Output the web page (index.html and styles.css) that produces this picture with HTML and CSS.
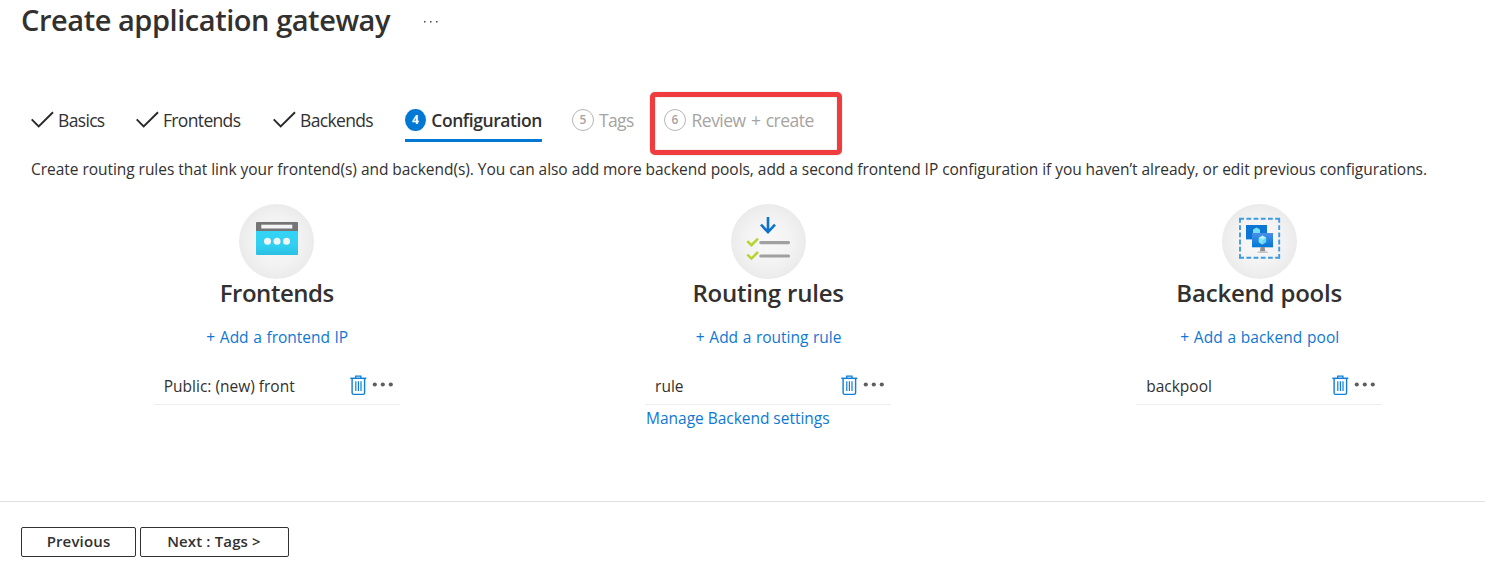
FILE: index.html
```html
<!DOCTYPE html>
<html lang="en">
<head>
<meta charset="utf-8">
<title>Create application gateway</title>
<link rel="stylesheet" href="styles.css">
</head>
<body>
<svg class="defs" width="0" height="0">
  <defs>
    <radialGradient id="disc"><stop offset="0" stop-color="#f8f8f8"/><stop offset="0.6" stop-color="#f3f3f3"/><stop offset="1" stop-color="#ebebeb"/></radialGradient>
    <linearGradient id="cyan" x1="0" y1="0" x2="0" y2="1"><stop offset="0" stop-color="#32d4f5"/><stop offset="0.6" stop-color="#32d0f2"/><stop offset="1" stop-color="#2bc0e2"/></linearGradient>
    <linearGradient id="screen" x1="0" y1="1" x2="0" y2="0"><stop offset="0" stop-color="#0078d4"/><stop offset="1" stop-color="#4a8fea"/></linearGradient>
    <symbol id="check" viewBox="0 0 24 18"><path d="M0.7 8.4 7.7 15.4 22 1.3" fill="none" stroke="#292827" stroke-width="1.9"/></symbol>
    <symbol id="trash" viewBox="0 0 17 21"><g fill="none" stroke="#0f7fd8"><path d="M0.3 3.3H16.3" stroke-width="1.5"/><path d="M5.7 3V1.1H10.9V3" stroke-width="1.3"/><path d="M2.1 4V17.8Q2.1 19.4 3.7 19.4H13Q14.6 19.4 14.6 17.8V4" stroke-width="1.4"/><path d="M5.8 6.3V16M8.4 6.3V16M11 6.3V16" stroke-width="1.2"/></g></symbol>
    <symbol id="more" viewBox="0 0 22 5"><g fill="#605e5c"><circle cx="2.8" cy="2.5" r="2.1"/><circle cx="10.8" cy="2.5" r="2.1"/><circle cx="18.8" cy="2.5" r="2.1"/></g></symbol>
  </defs>
</svg>

<header class="title-bar">
  <h1 class="title">Create application gateway</h1>
  <svg class="title-more" width="15" height="3"><g fill="#444"><rect x="1" y="1" width="1.5" height="1.5"/><rect x="7" y="1" width="1.5" height="1.5"/><rect x="13" y="1" width="1.5" height="1.5"/></g></svg>
</header>

<nav class="tabs">
  <a class="tab tab-basics"><svg class="check"><use href="#check"/></svg><span>Basics</span></a>
  <a class="tab tab-frontends"><svg class="check"><use href="#check"/></svg><span>Frontends</span></a>
  <a class="tab tab-backends"><svg class="check"><use href="#check"/></svg><span>Backends</span></a>
  <a class="tab tab-active"><b class="step">4</b><span class="label">Configuration</span></a>
  <a class="tab tab-off tab-tags"><b class="step">5</b><span>Tags</span></a>
  <a class="tab tab-off tab-review"><b class="step">6</b><span>Review + create</span><i class="highlight"></i></a>
</nav>

<p class="intro">Create routing rules that link your frontend(s) and backend(s). You can also add more backend pools, add a second frontend IP configuration if you haven’t already, or edit previous configurations.</p>

<main class="columns">
  <section class="column">
    <svg class="disc" viewBox="0 0 75 75">
      <circle cx="37.5" cy="37.5" r="37.5" fill="url(#disc)"/>
      <rect x="17" y="26" width="42" height="25" rx="1" fill="url(#cyan)"/>
      <path d="M17 27V19Q17 18 18 18H58Q59 18 59 19V27Z" fill="#757575"/>
      <rect x="22.3" y="20.7" width="31" height="3.8" fill="#f5f5f5"/>
      <g fill="#f2f5f6"><circle cx="28.5" cy="37.3" r="3.5"/><circle cx="38" cy="37.3" r="3.5"/><circle cx="47.5" cy="37.3" r="3.5"/></g>
    </svg>
    <h2 class="heading heading-frontends">Frontends</h2>
    <a class="add">+ Add a frontend IP</a>
    <div class="item"><span class="name">Public: (new) front</span><svg class="trash"><use href="#trash"/></svg><svg class="more"><use href="#more"/></svg></div>
  </section>
  <section class="column">
    <svg class="disc" viewBox="0 0 75 75">
      <circle cx="37.5" cy="37.5" r="37.5" fill="url(#disc)"/>
      <path d="M37 13V28M30 20.7 37 28.2 44 20.7" fill="none" stroke="#0f73c9" stroke-width="2.6"/>
      <path d="M29.8 38.6H57.5M29.8 52H57.5" stroke="#a0a0a0" stroke-width="3.2" stroke-linecap="round"/>
      <path d="M16.3 37.2 20.5 41.2 27 34.6M16.3 50.6 20.5 54.6 27 48" fill="none" stroke="#b4d52d" stroke-width="2.5"/>
    </svg>
    <h2 class="heading">Routing rules</h2>
    <a class="add">+ Add a routing rule</a>
    <div class="item"><span class="name">rule</span><svg class="trash"><use href="#trash"/></svg><svg class="more"><use href="#more"/></svg></div>
    <a class="manage">Manage Backend settings</a>
  </section>
  <section class="column">
    <svg class="disc" viewBox="0 0 75 75">
      <circle cx="37.5" cy="37.5" r="37.5" fill="url(#disc)"/>
      <g fill="none" stroke="#3f9be0" stroke-width="1.9"><path d="M17.2 14.7H58M17.2 53.7H58" stroke-dasharray="4.8 2.4"/><path d="M18 14V54.5M57.2 14V54.5" stroke-dasharray="4.8 2.4"/></g>
      <rect x="24" y="21" width="21" height="14.4" fill="#0b76d3"/>
      <path d="M34.5 23.5 38 25.5V29H31V25.5Z" fill="#75dff5"/>
      <rect x="30" y="29" width="21" height="14.3" fill="url(#screen)"/>
      <path d="M38.6 43H42.6L43.3 47.5H37.9Z" fill="#8f8f8f"/><path d="M36 47.5H45.4L46.2 49H35.2Z" fill="#c6c6c6"/>
      <path d="M40.5 31.6 44.2 33.7V38.3L40.5 40.5 36.8 38.3V33.7Z" fill="#65d7f5"/><path d="M40.5 31.6 44.2 33.7 40.5 35.9 36.8 33.7Z" fill="#b1effb"/><path d="M40.5 35.9V40.5L36.8 38.3V33.7Z" fill="#86e4f8"/>
    </svg>
    <h2 class="heading">Backend pools</h2>
    <a class="add add-pool">+ Add a backend pool</a>
    <div class="item"><span class="name">backpool</span><svg class="trash"><use href="#trash"/></svg><svg class="more"><use href="#more"/></svg></div>
  </section>
</main>

<footer class="footer">
  <button class="button button-previous">Previous</button>
  <button class="button button-next">Next : Tags &gt;</button>
</footer>
</body>
</html>
```
FILE: styles.css
```css
* { box-sizing: border-box; }
body {
  margin: 0;
  height: 567px;
  overflow: hidden;
  display: flex;
  flex-direction: column;
  background: #fff;
  color: #323130;
  font-family: "Open Sans", sans-serif;
  font-size: 15.5px;
  line-height: 22px;
  white-space: nowrap;
}
svg { display: block; flex: none; }
.defs { position: absolute; }
.title-bar { display: flex; height: 100px; padding-left: 21px; }
.title { width: 402px; margin: 0; font-size: 29px; font-weight: 600; line-height: 40px; letter-spacing: -0.45px; }
.title-more { margin-top: 20px; }

.tabs { display: flex; height: 58px; padding-left: 31px; font-size: 17.5px; letter-spacing: -0.66px; line-height: 24px; }
.tab { position: relative; display: flex; height: 42px; padding-top: 8px; }
.tab-basics { width: 105px; }
.tab-frontends { width: 137px; }
.tab-backends { width: 132px; }
.check { width: 24px; height: 18px; margin: 3px 3px 0 0; }
.step {
  width: 22px; height: 22px; margin: 1px 5px 0 0;
  border-radius: 50%;
  font-size: 12px; font-weight: 600; line-height: 20px; text-align: center; letter-spacing: 0;
}
.tab-active { width: 137px; margin-right: 30px; border-bottom: 3px solid #0078d4; font-weight: 600; letter-spacing: -0.42px; }
.tab-active .step { background: #0078d4; color: #fff; font-weight: 700; line-height: 21px; }
.tab-active .label { margin-left: 0.5px; }
.tab-off { color: #a6a4a2; }
.tab-off .step { border: 1.5px solid #b8b6b4; }
.tab-tags { width: 92px; }
.tab-review { letter-spacing: -0.5px; word-spacing: 1.2px; }
.tab-review .step { margin: 1px 5.5px 0 0; }
.highlight {
  position: absolute; left: -14px; top: -8px; width: 192px; height: 63px;
  border: 5px solid #f03c3c; border-radius: 5px;
  box-shadow: 0 0 1px #777, inset 0 0 1px #777;
}

.intro { height: 46px; margin: 0; padding-left: 31px; letter-spacing: -0.042px; }

.columns { display: grid; grid-template-columns: 491.5px 491.2px 491px; height: 297px; padding-left: 31px; }
.column { display: flex; flex-direction: column; align-items: center; }
.disc { width: 75px; height: 75px; }
.heading { height: 48px; margin: -1px 0 0; font-size: 24px; font-weight: 600; line-height: 30px; letter-spacing: -0.2px; }
.heading-frontends { letter-spacing: -0.45px; }
.add { height: 22px; padding-left: 1px; color: #0f78d4; letter-spacing: -0.03px; word-spacing: 0.7px; }
.add-pool { letter-spacing: 0.02px; }
.item { display: flex; width: 246px; height: 57px; padding: 27px 6px 0 10px; border-bottom: 1px solid #f0eeed; }
.name { width: 186px; }
.trash { width: 17px; height: 21px; }
.more { width: 22px; height: 5px; margin: 7px 0 0 5px; }
.manage { width: 244px; margin-top: 2px; color: #0f78d4; letter-spacing: -0.03px; }

.footer { display: flex; gap: 4px; height: 66px; padding: 25px 0 0 21px; border-top: 1px solid #e1dfdd; }
.button {
  height: 30px; padding: 0 0 2px; border: 1px solid #323130; border-radius: 2px; background: #fff; color: #323130;
  font: 600 15px/26px "Open Sans", sans-serif; letter-spacing: 0.15px;
}
.button-previous { width: 115px; }
.button-next { width: 149px; padding-right: 1px; }
```
